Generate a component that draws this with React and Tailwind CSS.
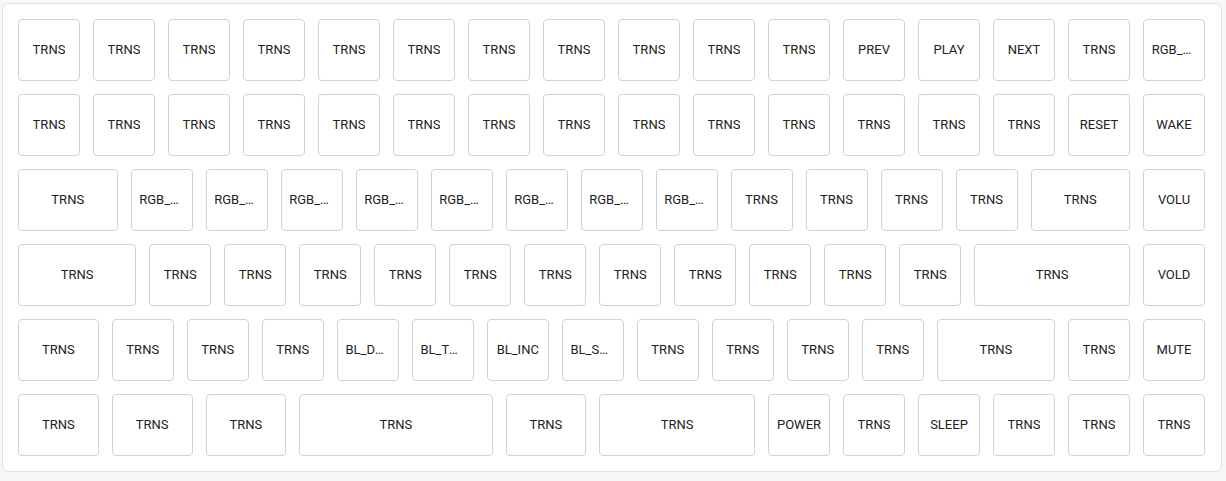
const W = {
  1: "w-[62px]",
  1.25: "w-[80.75px]",
  1.5: "w-[99.5px]",
  1.75: "w-[118.25px]",
  2.25: "w-[155.75px]",
  2.75: "w-[193.25px]",
};

const t = (n, u = 1) => Array.from({ length: n }, () => ["TRNS", u]);

const rows = [
  [...t(11), ["PREV"], ["PLAY"], ["NEXT"], ["TRNS"], ["RGB_TOG"]],
  [...t(14), ["RESET"], ["WAKE"]],
  [
    ["TRNS", 1.5],
    ["RGB_TOG"], ["RGB_MOD"], ["RGB_HUI"], ["RGB_HUD"],
    ["RGB_SAI"], ["RGB_SAD"], ["RGB_VAI"], ["RGB_VAD"],
    ...t(4),
    ["TRNS", 1.5],
    ["VOLU"],
  ],
  [["TRNS", 1.75], ...t(11), ["TRNS", 2.25], ["VOLD"]],
  [
    ["TRNS", 1.25],
    ...t(3),
    ["BL_DEC"], ["BL_TOGG"], ["BL_INC"], ["BL_STEP"],
    ...t(4),
    ["TRNS", 1.75],
    ["TRNS"],
    ["MUTE"],
  ],
  [
    ["TRNS", 1.25], ["TRNS", 1.25], ["TRNS", 1.25],
    ["TRNS", 2.75],
    ["TRNS", 1.25],
    ["TRNS", 2.25],
    ["POWER"], ["TRNS"], ["SLEEP"], ["TRNS"], ["TRNS"], ["TRNS"],
  ],
];

function Key({ label, u = 1 }) {
  return (
    <div
      className={`${W[u]} h-[62px] shrink-0 flex items-center justify-center rounded-[4px] border border-[#d2d2d2] bg-white px-[7.75px]`}
    >
      <span className="block min-w-0 truncate text-[13px] leading-[18px] text-[#222]">{label}</span>
    </div>
  );
}

export default function App() {
  return (
    <div className="min-h-[481px] bg-[#f7f7f7] pl-[2px] pt-[3px] font-['Roboto',sans-serif]">
      <div className="w-[1220px] rounded-[6px] border border-[#e2e2e2] bg-white p-[15px] flex flex-col gap-[13px]">
        {rows.map((row, i) => (
          <div key={i} className="flex gap-[13px]">
            {row.map(([label, u], j) => (
              <Key key={j} label={label} u={u || 1} />
            ))}
          </div>
        ))}
      </div>
    </div>
  );
}
